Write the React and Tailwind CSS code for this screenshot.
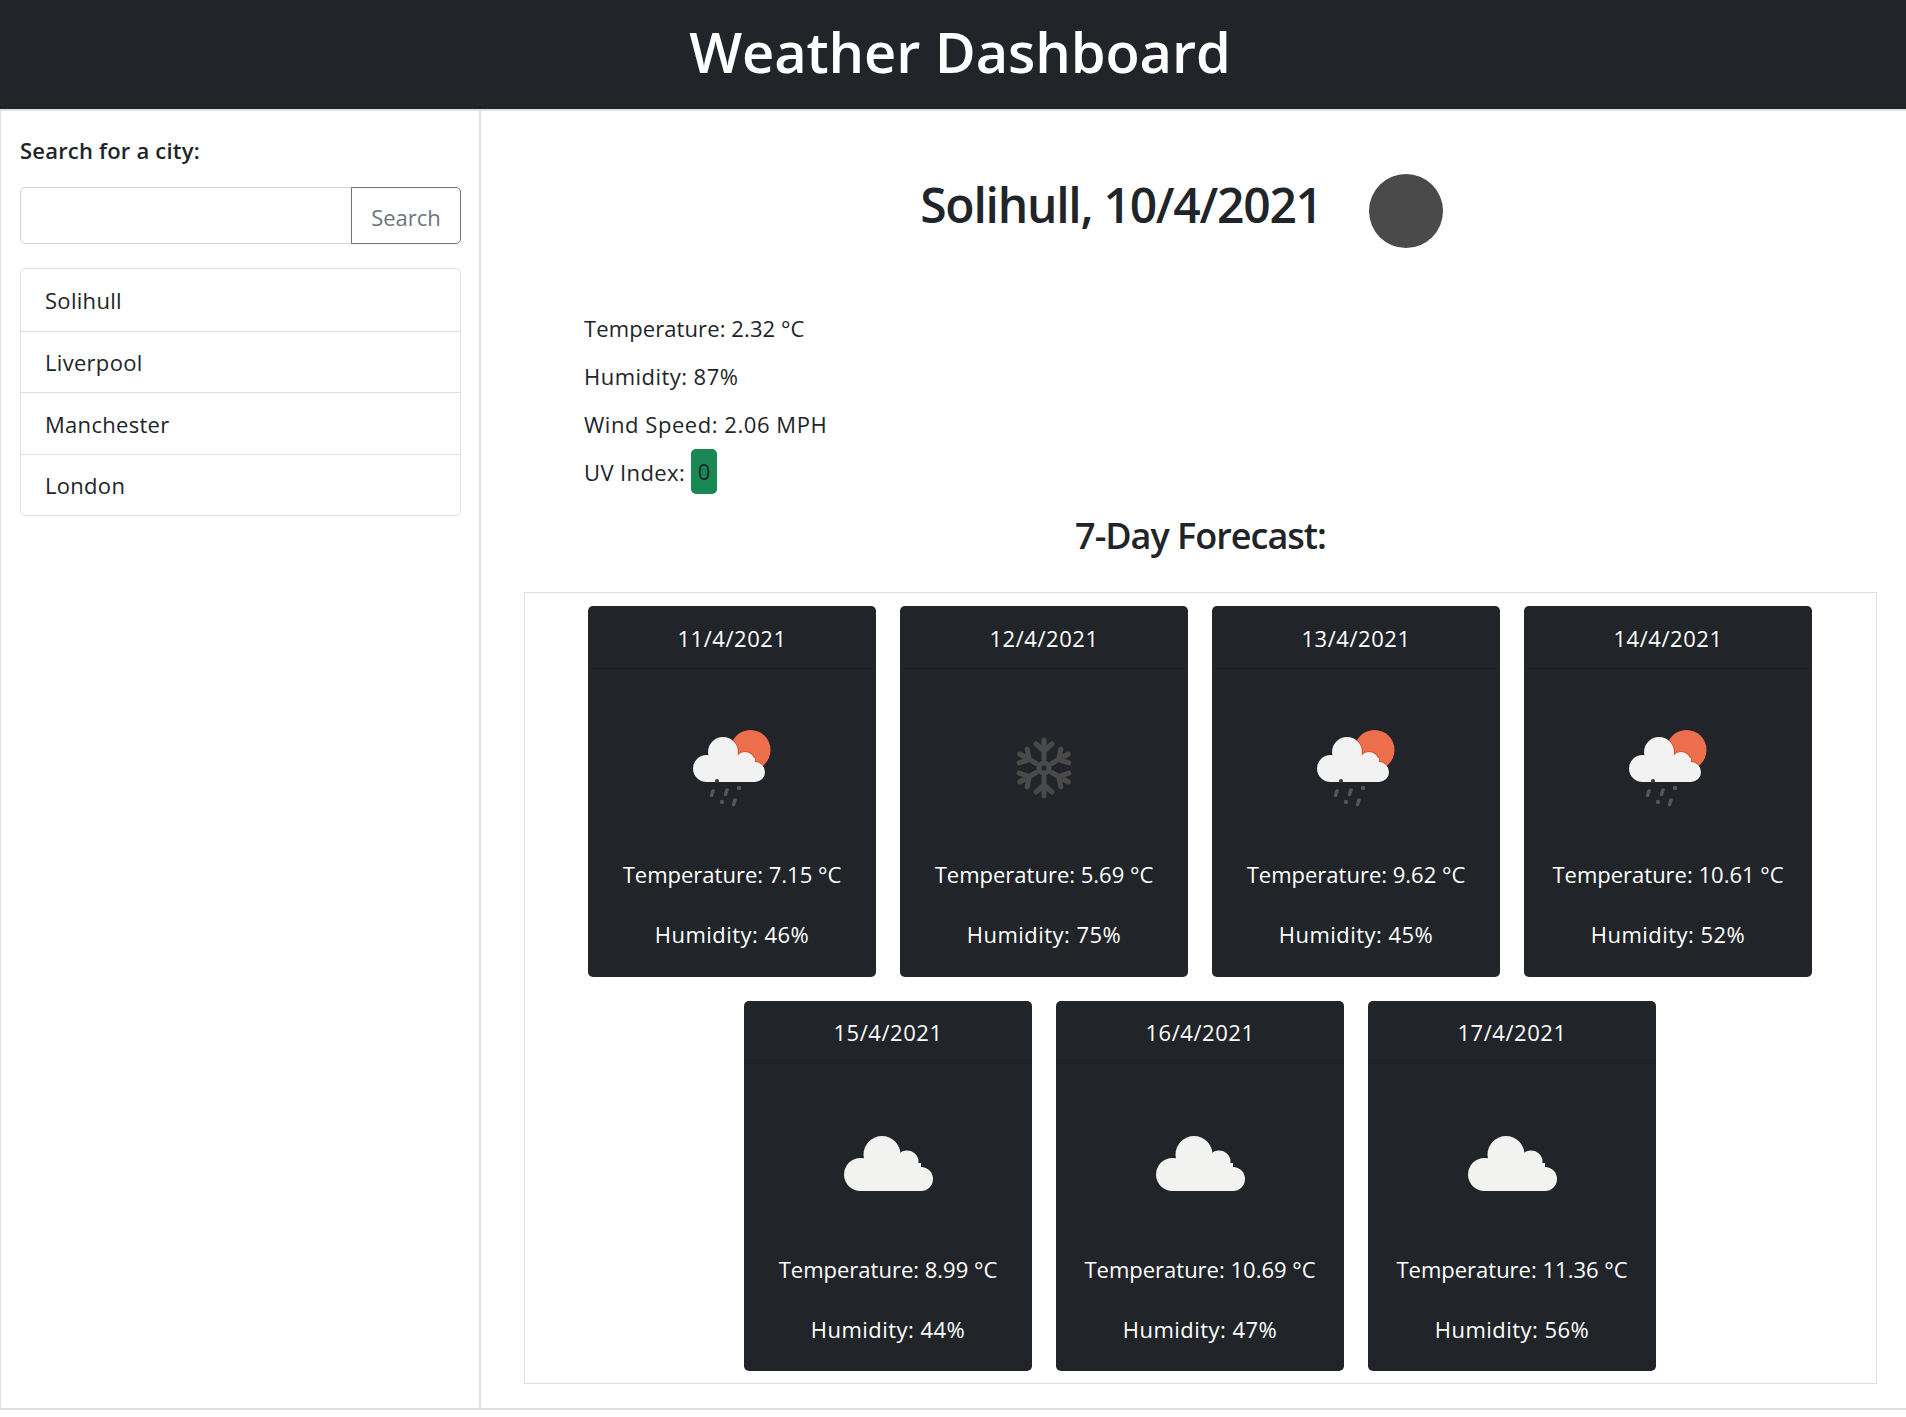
// Weather dashboard: header, search sidebar, current conditions and forecast cards
const cities = ['Solihull', 'Liverpool', 'Manchester', 'London'];

const forecast = [
  [
    { date: '11/4/2021', icon: 'rain', temp: '7.15', hum: '46' },
    { date: '12/4/2021', icon: 'snow', temp: '5.69', hum: '75' },
    { date: '13/4/2021', icon: 'rain', temp: '9.62', hum: '45' },
    { date: '14/4/2021', icon: 'rain', temp: '10.61', hum: '52' },
  ],
  [
    { date: '15/4/2021', icon: 'cloud', temp: '8.99', hum: '44' },
    { date: '16/4/2021', icon: 'cloud', temp: '10.69', hum: '47' },
    { date: '17/4/2021', icon: 'cloud', temp: '11.36', hum: '56' },
  ],
];

function RainIcon() {
  return (
    <svg viewBox="0 0 100 100" className="w-[100px] h-[100px]">
      <defs>
        <clipPath id="sun-clip">
          <circle cx="68.5" cy="32" r="20" />
        </clipPath>
      </defs>
      <circle cx="68.5" cy="32" r="20" fill="#ec6e4c" />
      {/* darker rim where the cloud overlaps the sun */}
      <g fill="#e4552f" clipPath="url(#sun-clip)">
        <circle cx="41" cy="34" r="16" />
        <circle cx="63" cy="44" r="11" />
        <circle cx="73" cy="54" r="11" />
      </g>
      <g fill="#f2f2f2">
        <circle cx="24.5" cy="50.5" r="13.5" />
        <circle cx="41" cy="34" r="15" />
        <circle cx="63" cy="44" r="10" />
        <circle cx="73" cy="54" r="10" />
        <rect x="25" y="40" width="48" height="24" />
      </g>
      <circle cx="35" cy="63" r="2" fill="#33363a" />
      <g stroke="#55585b" strokeWidth="3.5" strokeLinecap="round">
        <path d="M31 73 29.5 77.5" />
        <path d="M45 72 43.5 76.5" />
        <path d="M53 82 51.5 86.5" />
      </g>
      <circle cx="57" cy="70" r="2.2" fill="#55585b" />
      <circle cx="40" cy="84" r="2.2" fill="#55585b" />
    </svg>
  );
}

function SnowIcon() {
  return (
    <svg viewBox="0 0 100 100" className="w-[100px] h-[100px]">
      <g stroke="#4a4a4a" strokeWidth="5" strokeLinecap="round" strokeLinejoin="round" fill="none">
        <circle cx="50" cy="50" r="5" />
        {[0, 60, 120, 180, 240, 300].map((deg) => (
          <g key={deg} transform={`rotate(${deg} 50 50)`}>
            <path d="M50 41V22" />
            <path d="M42 26 50 33 58 26" />
          </g>
        ))}
      </g>
    </svg>
  );
}

function CloudIcon() {
  return (
    <svg viewBox="0 0 100 100" className="w-[100px] h-[100px]">
      <g fill="#f2f2f0">
        <circle cx="22.5" cy="61.5" r="16.5" />
        <circle cx="44" cy="41.5" r="18.5" />
        <circle cx="69" cy="49" r="11.5" />
        <circle cx="83" cy="66" r="12" />
        <rect x="22" y="50" width="61" height="28" />
      </g>
    </svg>
  );
}

function ForecastCard({ day }) {
  return (
    <div className="w-[288px] h-[370.5px] bg-[#212529] text-white rounded-[5px] flex flex-col">
      <div className="h-[63px] flex items-center justify-center border-b border-black/15 tracking-[0.55px] pt-[1px]">{day.date}</div>
      <div className="h-[190px] flex items-center justify-center pt-[8px]">
        {day.icon === 'rain' && <RainIcon />}
        {day.icon === 'snow' && <SnowIcon />}
        {day.icon === 'cloud' && <CloudIcon />}
      </div>
      <p className="text-center leading-[30px]">Temperature: {day.temp} °C</p>
      <p className="text-center leading-[30px] mt-[30px] tracking-[0.46px]">Humidity: {day.hum}%</p>
    </div>
  );
}

export default function App() {
  return (
    <div className="font-['Open_Sans','Noto_Sans',sans-serif] text-[#212529] text-[22px] leading-[30px] bg-white h-[1417px]">
      <header className="h-[109px] bg-[#212529] text-white flex items-center justify-center">
        <h1 className="text-[56px] leading-[64px] font-semibold tracking-[-0.1px] ml-[14px] mb-[8px]">Weather Dashboard</h1>
      </header>

      <div className="flex h-[1301px] border-t-2 border-b-2 border-[#dfe0e2]">
        <aside className="w-[481px] shrink-0 border-l border-r-2 border-[#dfe0e2] pl-[19px] pr-[18px] pt-[24px]">
          <h2 className="font-semibold text-[22px] leading-[30px] tracking-[0.2px]">Search for a city:</h2>
          <div className="flex h-[57px] mt-[22px]">
            <div className="flex-1 border border-[#ced4da] rounded-l-[5px]"></div>
            <button className="w-[110px] border border-[#6c757d] rounded-r-[5px] text-[#6c757d] -ml-px pt-[3px]">Search</button>
          </div>
          <ul className="mt-[24px] border border-[#dfdfdf] rounded-[5px]">
            {cities.map((city, i) => (
              <li
                key={city}
                className={`h-[61.5px] flex items-center pl-[24px] pt-[1px] tracking-[0.3px] ${i > 0 ? 'border-t border-[#dfdfdf]' : ''}`}
              >
                {city}
              </li>
            ))}
          </ul>
        </aside>

        <main className="flex-1 pl-[43px] pr-[29px] flex flex-col">
          <div className="h-[192px] flex items-center justify-center pr-[38px]">
            <h2 className="text-[48px] leading-[60px] font-semibold tracking-[-1.25px] -mt-[4px]">Solihull, 10/4/2021</h2>
            <div className="w-[74px] h-[74px] rounded-[50%] bg-[#4a4a4a] ml-[47px] mt-[8px]"></div>
          </div>

          <div className="pl-[60px] pt-[10px]">
            <p className="leading-[30px] tracking-[0.1px]">Temperature: 2.32 °C</p>
            <p className="leading-[30px] mt-[18px] tracking-[0.46px]">Humidity: 87%</p>
            <p className="leading-[30px] mt-[18px] tracking-[0.55px]">Wind Speed: 2.06 MPH</p>
            <p className="leading-[30px] mt-[18px] flex items-center h-[30px] tracking-[0.4px]">
              UV Index:
              <span className="ml-[6px] w-[26px] h-[45px] -mt-[2px] bg-[#198754] rounded-[5px] flex items-center justify-center">0</span>
            </p>
          </div>

          <h3 className="text-center text-[36px] leading-[42px] font-semibold tracking-[-1px] mt-[28px]">7-Day Forecast:</h3>

          <div className="mt-[35px] h-[792px] border border-[#dfdfdf] pt-[13px] pr-[1px] flex flex-col gap-[24px] items-center">
            {forecast.map((row, i) => (
              <div key={i} className="flex justify-center gap-[24px]">
                {row.map((day) => (
                  <ForecastCard key={day.date} day={day} />
                ))}
              </div>
            ))}
          </div>
        </main>
      </div>
    </div>
  );
}
